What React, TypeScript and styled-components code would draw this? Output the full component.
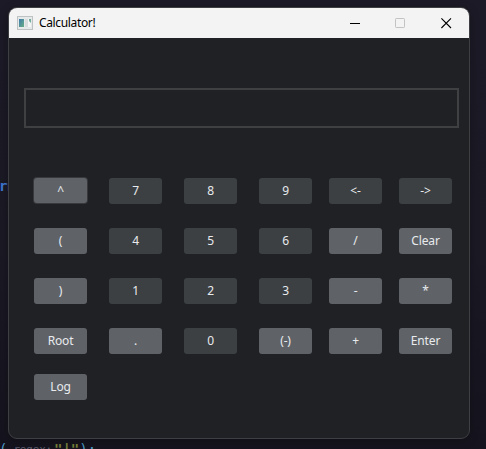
import React from "react";
import styled, { createGlobalStyle } from "styled-components";

const GlobalStyle = createGlobalStyle`
  body {
    margin: 0;
    overflow: hidden;
    background: #1a1924;
  }
`;

const Desktop = styled.main`
  display: grid;
  grid-template: 449px / 486px;
  overflow: hidden;
  background: linear-gradient(180deg, #1b1a26 0%, #1a1924 55%, #15131d 100%);
  font-family: "Noto Sans", "Open Sans", sans-serif;
`;

const Editor = styled.div`
  grid-area: 1 / 1;
  display: flex;
  flex-direction: column;
  justify-content: space-between;
  box-sizing: border-box;
  height: 458px;
  padding-top: 178px;
  color: #4b9ac6;
  font: 14px/16px "DejaVu Sans Mono", monospace;
  white-space: pre;
`;

const CodeLine = styled.div`
  display: flex;
  align-items: center;
  margin-left: -1px;
`;

const Keyword = styled.span`
  color: #3f74d1;
  font-weight: 700;
  letter-spacing: -0.5px;
`;

const Hint = styled.span`
  margin: 3px 2px 0 6px;
  color: #5c5b6d;
  font-size: 11px;
  letter-spacing: -0.2px;
`;

const Literal = styled.span`
  color: #76803a;
  font-weight: 700;
`;

const Window = styled.section`
  grid-area: 1 / 1;
  z-index: 1;
  box-sizing: border-box;
  width: 462px;
  height: 432px;
  margin: 7px 0 0 8px;
  border: 1px solid #3e3f43;
  border-radius: 9px;
  overflow: hidden;
  background: #202124;
  box-shadow: 0 2px 10px rgba(0, 0, 0, 0.25);
`;

const TitleBar = styled.header`
  display: flex;
  align-items: center;
  height: 30px;
  padding: 0 17px 0 8px;
  background: #f3f3f3;
`;

const Title = styled.h1`
  flex: 1;
  margin: 0 0 0 6px;
  color: #000;
  font-size: 12px;
  font-weight: 400;
  line-height: 28px;
  letter-spacing: -0.35px;
`;

const Controls = styled.div`
  display: grid;
  grid-template-columns: 45px 46px 11px;

  svg {
    display: block;
  }
`;

const Display = styled.div`
  box-sizing: border-box;
  width: 435px;
  height: 40px;
  margin: 50px 0 50px 15px;
  border: 2px solid #3f4042;
`;

const Keypad = styled.div`
  display: grid;
  grid-template-columns: 75px 75px 75px 70px 70px 53px;
  grid-template-rows: 50px 50px 50px 46px 26px;
  align-items: start;
  justify-items: start;
  margin-left: 25px;
`;

const Key = styled.button<{ $tone: "dark" | "light"; $focused?: boolean }>`
  width: 53px;
  height: ${(p) => (p.$focused ? 25 : 26)}px;
  padding: 0 0 1px;
  border: 0;
  border-radius: 3px;
  background: ${(p) => (p.$tone === "dark" ? "#3c4043" : "#5f6368")};
  box-shadow: ${(p) => (p.$focused ? "0 0 0 1px #37393d" : "none")};
  color: #e8eaed;
  font-family: "Noto Sans", "Open Sans", sans-serif;
  font-size: 12px;
  letter-spacing: -0.15px;
  line-height: 25px;
  text-align: center;
`;

const keys = [
  "^", "7", "8", "9", "<-", "->",
  "(", "4", "5", "6", "/", "Clear",
  ")", "1", "2", "3", "-", "*",
  "Root", ".", "0", "(-)", "+", "Enter",
  "Log",
];

const AppIcon = () => (
  <svg width="16" height="14" viewBox="0 0 16 14">
    <defs>
      <linearGradient id="screen" x1="0" y1="0" x2="1" y2="1">
        <stop offset="0" stopColor="#3d7bad" />
        <stop offset="1" stopColor="#68ad84" />
      </linearGradient>
    </defs>
    <rect x=".5" y=".5" width="15" height="13" fill="#e6e9e9" stroke="#bfc2c3" />
    <rect x="2" y="3" width="5" height="8" fill="url(#screen)" />
    <rect x="8" y="3" width="3" height="8" fill="#d9dddd" />
    <rect x="11" y="3" width="3" height="8" fill="#f4f5f5" />
    <path d="M12 3h2v4l-2-2z" fill="#75ad9d" />
  </svg>
);

export default function App() {
  return (
    <>
      <GlobalStyle />
      <Desktop>
        <Editor>
          <CodeLine>
            <Keyword>rn</Keyword>
          </CodeLine>
          <CodeLine>
            <span>(</span>
            <Hint>regex:</Hint>
            <Literal>"|"</Literal>
            <span>);</span>
          </CodeLine>
        </Editor>
        <Window>
          <TitleBar>
            <AppIcon />
            <Title>Calculator!</Title>
            <Controls>
              <svg width="11" height="11" viewBox="0 0 11 11">
                <path d="M0 5.5H10" stroke="#000" />
              </svg>
              <svg width="10" height="11" viewBox="0 0 10 11">
                <rect x=".5" y=".5" width="9" height="9" rx=".7" fill="none" stroke="#c3c3c3" />
              </svg>
              <svg width="11" height="11" viewBox="0 0 11 11">
                <path d="M.4.4 10 10M10 .4.4 10" stroke="#000" strokeWidth="1.1" />
              </svg>
            </Controls>
          </TitleBar>
          <Display />
          <Keypad>
            {keys.map((label, i) => (
              <Key
                key={label}
                $tone={/^[0-9]$|^<-$|^->$/.test(label) ? "dark" : "light"}
                $focused={i === 0}
              >
                {label}
              </Key>
            ))}
          </Keypad>
        </Window>
      </Desktop>
    </>
  );
}
